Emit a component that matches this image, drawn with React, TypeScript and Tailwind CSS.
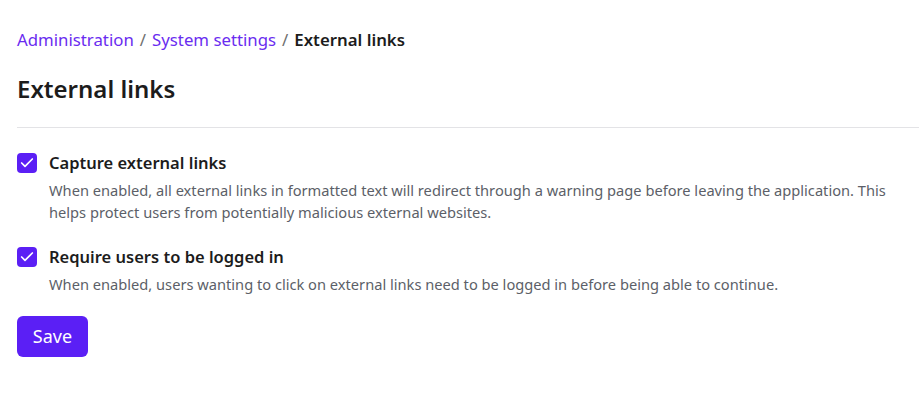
import { Check } from "lucide-react";

const settings = [
  {
    key: "capture",
    label: "Capture external links",
    help: "When enabled, all external links in formatted text will redirect through a warning page before leaving the application. This helps protect users from potentially malicious external websites.",
  },
  {
    key: "login",
    label: "Require users to be logged in",
    help: "When enabled, users wanting to click on external links need to be logged in before being able to continue.",
  },
];

function CheckRow({ label, help }: { label: string; help: string }) {
  return (
    <div className="flex gap-3">
      <div className="mt-[1px] flex h-5 w-5 shrink-0 items-center justify-center rounded-[4px] bg-[#5b1ff5]">
        <Check className="h-4 w-4 text-white" strokeWidth={2.5} />
      </div>
      <div>
        <div className="text-[16.5px] font-semibold leading-[22px] text-[#1c1c1c]">{label}</div>
        <p className="mt-[5px] text-[14.65px] leading-[22px] text-[#5c5f68]">{help}</p>
      </div>
    </div>
  );
}

export default function App() {
  return (
    <div className="min-h-[406px] bg-white pt-[28px] font-['Noto_Sans',sans-serif]">
      <nav className="px-[17px] text-[16.8px] leading-[24px] text-[#6f6f6f]">
        <a className="text-[#6a2cf0]">Administration</a>
        <span className="mx-[6px]">/</span>
        <a className="text-[#6a2cf0]">System settings</a>
        <span className="mx-[6px]">/</span>
        <span className="font-semibold text-[#1c1c1c]">External links</span>
      </nav>
      <h1 className="mt-[21px] px-[17px] text-[24px] font-semibold leading-[32px] text-[#1c1c1c]">
        External links
      </h1>
      <hr className="ml-[17px] mt-[22px] border-[#e3e3e6]" />
      <div className="flex flex-col gap-[23px] pl-[17px] pr-[17px] pt-[24px]">
        {settings.map((s) => (
          <CheckRow key={s.key} label={s.label} help={s.help} />
        ))}
      </div>
      <div className="px-[17px] pt-[21px]">
        <button className="h-[41px] w-[71px] rounded-[6px] bg-[#5b1ff5] text-[18px] text-white">
          Save
        </button>
      </div>
    </div>
  );
}
